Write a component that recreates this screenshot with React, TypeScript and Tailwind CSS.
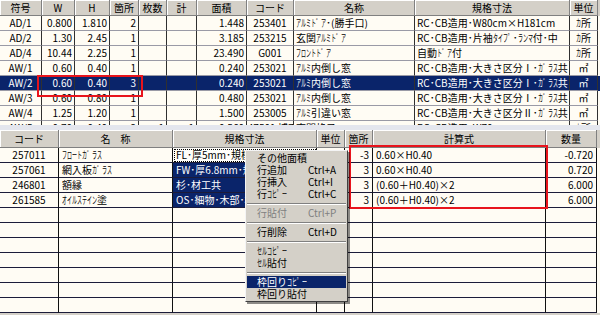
import React from "react";

type Col = { w: string; a: string };

// 半角カナは全角グリフを横半分に縮めて表示する
const HALF = "ｦｧｨｩｪｫｬｭｮｯｰｱｲｳｴｵｶｷｸｹｺｻｼｽｾｿﾀﾁﾂﾃﾄﾅﾆﾇﾈﾉﾊﾋﾌﾍﾎﾏﾐﾑﾒﾓﾔﾕﾖﾗﾘﾙﾚﾛﾜﾝﾞﾟ";
const FULL = "ヲァィゥェォャュョッーアイウエオカキクケコサシスセソタチツテトナニヌネノハヒフヘホマミムメモヤユヨラリルレロワン゛゜";

function Txt({ s }: { s: string }) {
  const parts: { kana: boolean; t: string }[] = [];
  for (const ch of s) {
    const kana = HALF.includes(ch);
    const last = parts[parts.length - 1];
    if (last && last.kana === kana) last.t += ch;
    else parts.push({ kana, t: ch });
  }
  return (
    <>
      {parts.map((p, i) =>
        p.kana ? (
          <span key={i} className="inline-block whitespace-nowrap" style={{ width: p.t.length * 5 }}>
            <span className="inline-block origin-left [transform:scaleX(0.5)]">
              {Array.from(p.t)
                .map((c) => FULL[HALF.indexOf(c)])
                .join("")}
            </span>
          </span>
        ) : (
          <span key={i}>{p.t}</span>
        )
      )}
    </>
  );
}

// 上段(建具一覧)の列
const topCols: Col[] = [
  { w: "w-[42px]", a: "justify-center" },
  { w: "w-[33px]", a: "justify-end" },
  { w: "w-[35px]", a: "justify-end" },
  { w: "w-[29px]", a: "justify-end" },
  { w: "w-[28px]", a: "justify-end" },
  { w: "w-[30px]", a: "justify-end" },
  { w: "w-[50px]", a: "justify-end" },
  { w: "w-[47px]", a: "justify-center" },
  { w: "w-[121px]", a: "justify-start" },
  { w: "w-[155px]", a: "justify-start" },
  { w: "w-[28px]", a: "justify-center" },
];

const topHeads = ["符号", "W", "H", "箇所", "枚数", "計", "面積", "コード", "名称", "規格寸法", "単位"];

const topRows = [
  ["AD/1", "0.800", "1.810", "2", "", "", "1.448", "253401", "ｱﾙﾐﾄﾞｱ･(勝手口)", "RC･CB造用･W80cm×H181cm", "ｶ所"],
  ["AD/2", "1.30", "2.45", "1", "", "", "3.185", "253215", "玄関ｱﾙﾐﾄﾞｱ", "RC･CB造用･片袖ﾀｲﾌﾟ･ﾗﾝﾏ付･中", "ｶ所"],
  ["AD/4", "10.44", "2.25", "1", "", "", "23.490", "G001", "ﾌﾛﾝﾄﾄﾞｱ", "自動ﾄﾞｱ付", "ｶ所"],
  ["AW/1", "0.60", "0.40", "1", "", "", "0.240", "253021", "ｱﾙﾐ内倒し窓", "RC･CB造用･大きさ区分Ⅰ･ｶﾞﾗｽ共", "㎡"],
  ["AW/2", "0.60", "0.40", "3", "", "", "0.240", "253021", "ｱﾙﾐ内倒し窓", "RC･CB造用･大きさ区分Ⅰ･ｶﾞﾗｽ共", "㎡"],
  ["AW/3", "0.60", "0.80", "1", "", "", "0.480", "253021", "ｱﾙﾐ内倒し窓", "RC･CB造用･大きさ区分Ⅰ･ｶﾞﾗｽ共", "㎡"],
  ["AW/4", "1.25", "1.20", "1", "", "", "1.500", "253005", "ｱﾙﾐ引違い窓", "RC･CB造用･大きさ区分Ⅱ･ｶﾞﾗｽ共", "㎡"],
  ["AW/5", "0.70", "0.40", "2", "1", "1", "0.560", "247501 補正", "玄関格子", "RC･CB造用･W70cm", "ｶ所"],
];

// 下段(内訳)の列
const botCols: Col[] = [
  { w: "w-[59px]", a: "justify-center" },
  { w: "w-[114px]", a: "justify-start" },
  { w: "w-[144px]", a: "justify-start" },
  { w: "w-[28px]", a: "justify-center" },
  { w: "w-[28px]", a: "justify-end" },
  { w: "w-[173px]", a: "justify-start" },
  { w: "w-[51px]", a: "justify-end" },
];

const botHeads = ["コード", "名　称", "規格寸法", "単位", "箇所", "計算式", "数量"];

const botRows = [
  ["257011", "ﾌﾛｰﾄｶﾞﾗｽ", "FL･厚5mm･規模2･材工共", "", "-3", "0.60×H0.40", "-0.720"],
  ["257061", "網入板ｶﾞﾗｽ", "FW･厚6.8mm･規模2･材工共", "", "3", "0.60×H0.40", "0.720"],
  ["246801", "額縁", "杉･材工共", "", "3", "(0.60＋H0.40)×2", "6.000"],
  ["261585", "ｵｲﾙｽﾃｲﾝ塗", "OS･細物･木部･材工共", "", "3", "(0.60＋H0.40)×2", "6.000"],
  ["", "", "", "", "", "", ""],
  ["", "", "", "", "", "", ""],
  ["", "", "", "", "", "", ""],
  ["", "", "", "", "", "", ""],
  ["", "", "", "", "", "", ""],
  ["", "", "", "", "", "", ""],
  ["", "", "", "", "", "", ""],
];

function HeadCell({ col, label }: { col: Col; label: string }) {
  return (
    <div
      className={`${col.w} h-full shrink-0 flex items-center justify-center bg-[#d4d0c8] border-r border-b border-[#808080] shadow-[inset_1px_1px_0_#ffffff] overflow-hidden whitespace-nowrap`}
    >
      {label}
    </div>
  );
}

function TopTable() {
  return (
    <div className="h-[125px] overflow-hidden bg-[#d4d0c8]">
      <div className="flex h-[16px]">
        {topCols.map((c, i) => (
          <HeadCell key={i} col={c} label={topHeads[i]} />
        ))}
      </div>
      {topRows.map((r, ri) => {
        const sel = ri === 4;
        return (
          <div
            key={ri}
            className={`flex h-[15px] ${sel ? "bg-[#0a246a] text-white" : "bg-[#fffcf4] text-black"}`}
          >
            {topCols.map((c, ci) => (
              <div
                key={ci}
                className={`${c.w} shrink-0 flex items-center ${c.a} px-[2px] border-r border-r-[#303030] border-b border-b-[#9a9aa6] overflow-hidden whitespace-nowrap`}
              >
                <Txt s={r[ci]} />
              </div>
            ))}
          </div>
        );
      })}
    </div>
  );
}

function BottomTable() {
  return (
    <div className="h-[185px] overflow-hidden bg-[#d4d0c8]">
      <div className="flex h-[18px]">
        {botCols.map((c, i) => (
          <HeadCell key={i} col={c} label={botHeads[i]} />
        ))}
      </div>
      {botRows.map((r, ri) => (
        <div key={ri} className="flex h-[15px] bg-[#fffcf4] text-black">
          {botCols.map((c, ci) => {
            let extra = "";
            if (ci === 2 && ri === 0) extra = "outline outline-1 outline-dotted outline-offset-[-2px] outline-black bg-[#fffefa]";
            if (ci === 2 && ri >= 1 && ri <= 3) extra = "bg-[#0a246a] text-white";
            return (
              <div
                key={ci}
                className={`${c.w} shrink-0 flex items-center ${c.a} px-[3px] border-r border-r-[#101010] border-b border-b-[#1c1c3a] overflow-hidden whitespace-nowrap ${extra}`}
              >
                <Txt s={r[ci]} />
              </div>
            );
          })}
        </div>
      ))}
    </div>
  );
}

type Item = { label?: string; key?: string; sep?: boolean; off?: boolean; hot?: boolean };

const menuItems: Item[] = [
  { label: "その他面積" },
  { label: "行追加", key: "Ctrl+A" },
  { label: "行挿入", key: "Ctrl+I" },
  { label: "行ｺﾋﾟｰ", key: "Ctrl+C" },
  { sep: true },
  { label: "行貼付", key: "Ctrl+P", off: true },
  { sep: true },
  { label: "行削除", key: "Ctrl+D" },
  { sep: true },
  { label: "ｾﾙｺﾋﾟｰ" },
  { label: "ｾﾙ貼付" },
  { sep: true },
  { label: "枠回りｺﾋﾟｰ", hot: true },
  { label: "枠回り貼付" },
];

function ContextMenu() {
  return (
    <div className="absolute left-[245px] top-[150px] w-[103px] bg-[#d4d0c8] border border-t-[#f4f4f4] border-l-[#f4f4f4] border-r-[#404040] border-b-[#404040] p-[1px] shadow-[2px_2px_0_rgba(0,0,0,0.45)]">
      {menuItems.map((m, i) =>
        m.sep ? (
          <div key={i} className="h-[7px] flex items-center">
            <div className="w-full h-[2px] border-t border-t-[#808080] border-b border-b-white" />
          </div>
        ) : (
          <div
            key={i}
            className={`h-[12px] flex items-center pl-[10px] whitespace-nowrap ${
              m.hot ? "bg-[#0a246a] text-white" : m.off ? "text-[#808080]" : "text-black"
            }`}
          >
            <span className="w-[51px] shrink-0">
              <Txt s={m.label ?? ""} />
            </span>
            {m.key && <span>{m.key}</span>}
          </div>
        )
      )}
    </div>
  );
}

export default function App() {
  return (
    <div className="relative w-[600px] h-[315px] overflow-hidden bg-[#d4d0c8] text-[10px] leading-none font-['Noto_Sans_CJK_JP','Noto_Sans',sans-serif]">
      <TopTable />
      <div className="h-[5px] bg-[#e4e6ee]" />
      <BottomTable />

      {/* 赤枠 */}
      <div className="absolute left-[37px] top-[75px] w-[106px] h-[22px] border-2 border-[#e8141c]" />
      <div className="absolute left-[349px] top-[145px] w-[199px] h-[64px] border-2 border-[#e8141c]" />

      <ContextMenu />
    </div>
  );
}
